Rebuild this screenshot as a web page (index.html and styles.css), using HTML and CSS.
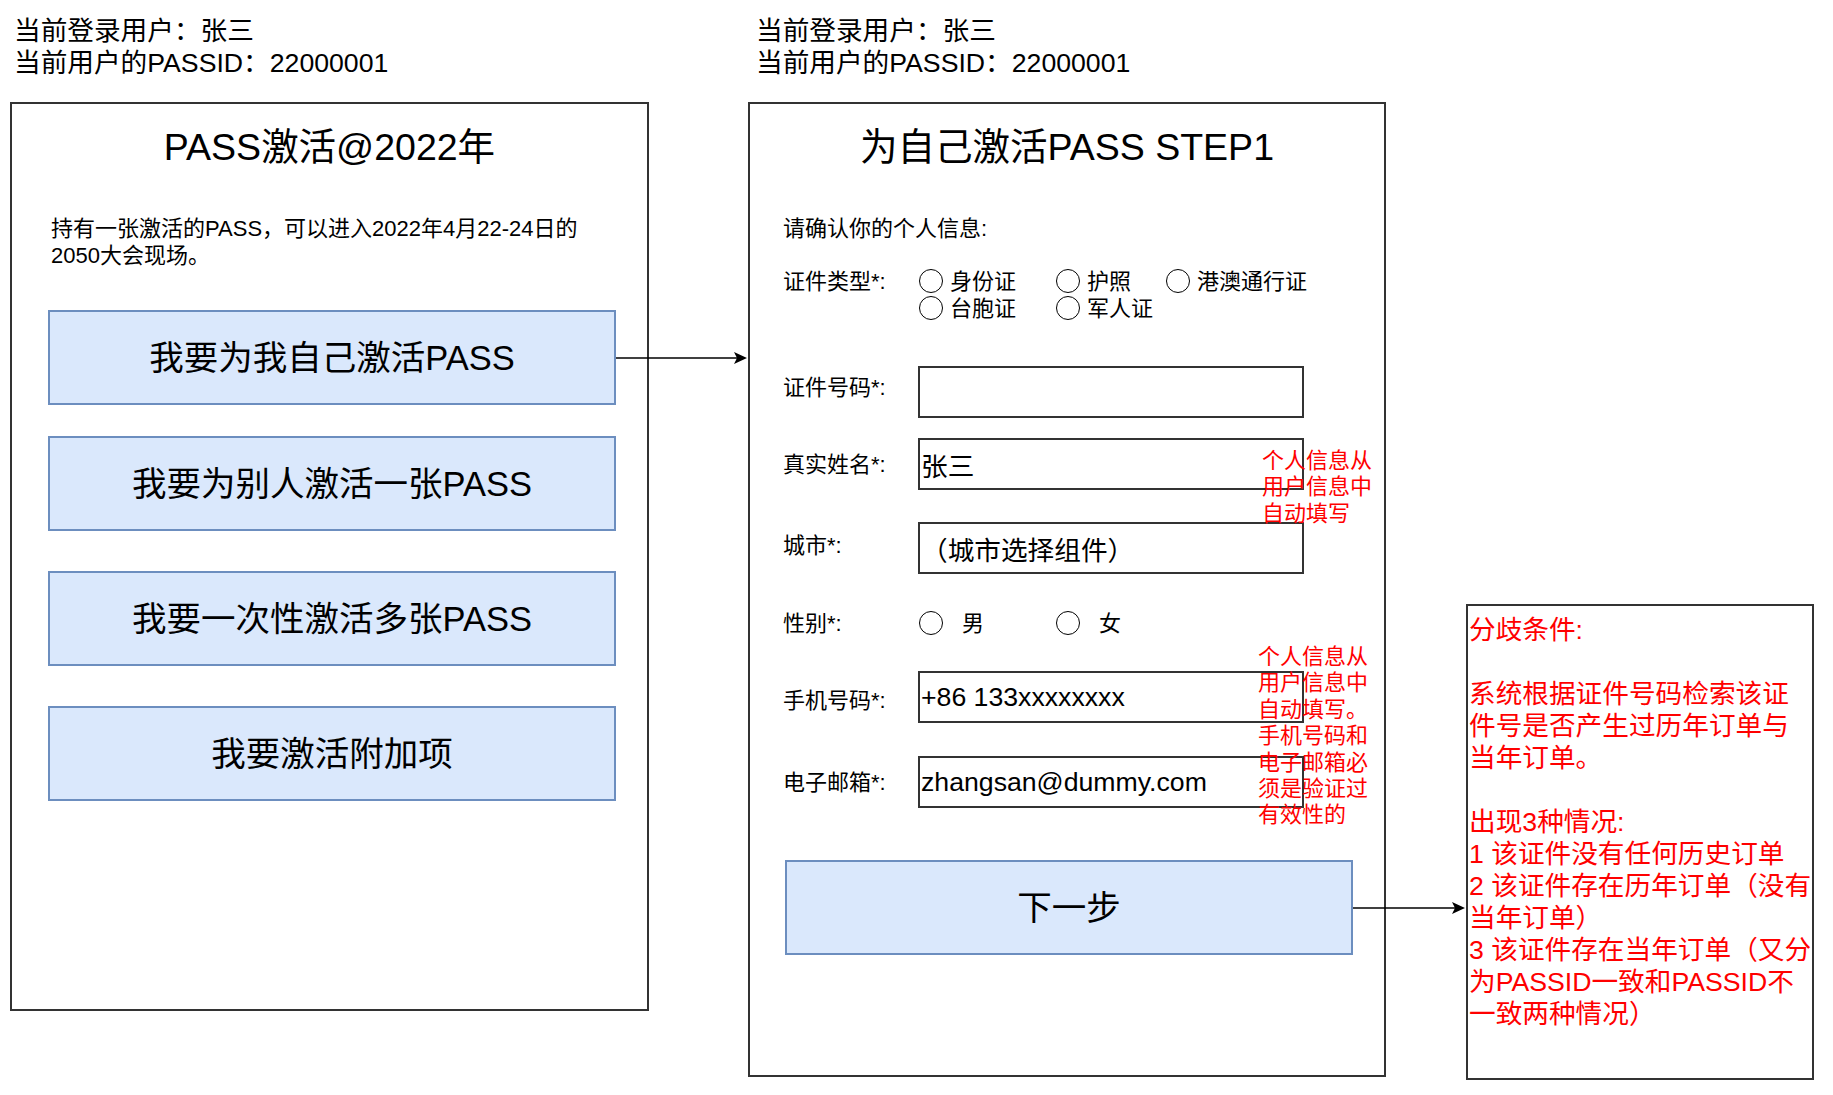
FILE: index.html
```html
<!DOCTYPE html>
<html lang="zh-CN">
<head>
<meta charset="utf-8">
<title>PASS激活</title>
<link rel="stylesheet" href="styles.css">
</head>
<body>
<div class="canvas">
  <section class="screen screen-home">
    <div class="user-info">
      <div>当前登录用户：张三</div>
      <div>当前用户的PASSID：22000001</div>
    </div>
    <div class="frame frame-home">
      <h1 class="frame-title">PASS激活@2022年</h1>
      <p class="intro">持有一张激活的PASS，可以进入2022年4月22-24日的<br>2050大会现场。</p>
      <div class="choice-list">
        <div class="choice choice-self">我要为我自己激活PASS
          <svg class="connector" width="131" height="14" viewBox="0 0 131 14"><line x1="0" y1="7" x2="121" y2="7" stroke="#000" stroke-width="1.5"/><path d="M118 1 L131 7 L118 13 L121 7 Z" fill="#000"/></svg>
        </div>
        <div class="choice">我要为别人激活一张PASS</div>
        <div class="choice">我要一次性激活多张PASS</div>
        <div class="choice">我要激活附加项</div>
      </div>
    </div>
  </section>

  <section class="screen screen-step1">
    <div class="user-info">
      <div>当前登录用户：张三</div>
      <div>当前用户的PASSID：22000001</div>
    </div>
    <div class="frame frame-step1">
      <h1 class="frame-title">为自己激活PASS STEP1</h1>
      <div class="form">
        <p class="form-intro">请确认你的个人信息:</p>
        <div class="field field-type">
          <span class="field-label">证件类型*:</span>
          <div class="options">
            <span class="option"><span class="radio"></span>身份证</span>
            <span class="option"><span class="radio"></span>护照</span>
            <span class="option"><span class="radio"></span>港澳通行证</span>
            <span class="option"><span class="radio"></span>台胞证</span>
            <span class="option"><span class="radio"></span>军人证</span>
          </div>
        </div>
        <div class="field field-id">
          <span class="field-label">证件号码*:</span>
          <div class="field-input"></div>
        </div>
        <div class="field field-name">
          <span class="field-label">真实姓名*:</span>
          <div class="field-input">张三</div>
        </div>
        <div class="field field-city">
          <span class="field-label">城市*:</span>
          <div class="field-input">（城市选择组件）</div>
        </div>
        <div class="field field-gender">
          <span class="field-label">性别*:</span>
          <div class="options options-gender">
            <span class="option"><span class="radio"></span>男</span>
            <span class="option"><span class="radio"></span>女</span>
          </div>
        </div>
        <div class="field field-phone">
          <span class="field-label">手机号码*:</span>
          <div class="field-input">+86 133xxxxxxxx</div>
        </div>
        <div class="field field-email">
          <span class="field-label">电子邮箱*:</span>
          <div class="field-input">zhangsan@dummy.com</div>
        </div>
        <div class="choice next">下一步
          <svg class="connector" width="112" height="14" viewBox="0 0 112 14"><line x1="0" y1="7" x2="102" y2="7" stroke="#000" stroke-width="1.5"/><path d="M99 1 L112 7 L99 13 L102 7 Z" fill="#000"/></svg>
        </div>
      </div>
      <p class="autofill-note note-name">个人信息从<br>用户信息中<br>自动填写</p>
      <p class="autofill-note note-contact">个人信息从<br>用户信息中<br>自动填写。<br>手机号码和<br>电子邮箱必<br>须是验证过<br>有效性的</p>
    </div>
  </section>

  <aside class="branch-note">分歧条件:<br><br>系统根据证件号码检索该证<br>件号是否产生过历年订单与<br>当年订单。<br><br>出现3种情况:<br>1 该证件没有任何历史订单<br>2 该证件存在历年订单（没有<br>当年订单）<br>3 该证件存在当年订单（又分<br>为PASSID一致和PASSID不<br>一致两种情况）</aside>
</div>
</body>
</html>
```

FILE: styles.css
```css
* {
  box-sizing: border-box;
}

body {
  margin: 0;
  background: #ffffff;
  color: #000000;
  font-family: "Liberation Sans", "Noto Sans CJK SC", sans-serif;
}

.canvas {
  display: flex;
  align-items: flex-start;
  width: 1833px;
  height: 1095px;
  padding-left: 10px;
}

.screen {
  display: flex;
  flex-direction: column;
}

.screen-home {
  width: 639px;
}

.screen-step1 {
  width: 638px;
  margin-left: 99px;
}

.user-info {
  margin-top: 15px;
  height: 64px;
  margin-bottom: 23px;
  font-size: 26.67px;
  line-height: 32px;
  white-space: nowrap;
}

.screen-home .user-info {
  padding-left: 4px;
}

.screen-step1 .user-info {
  padding-left: 8px;
}

.frame {
  position: relative;
  border: 2px solid #333333;
  background: #ffffff;
}

.frame-home {
  height: 909px;
}

.frame-step1 {
  height: 975px;
}

.frame-title {
  margin: 21px 0 0;
  font-size: 37.5px;
  line-height: 44px;
  font-weight: normal;
  text-align: center;
  white-space: nowrap;
}

.intro {
  margin: 45.5px 0 0 39px;
  font-size: 22px;
  line-height: 27px;
  white-space: nowrap;
}

.choice-list {
  display: flex;
  flex-direction: column;
  margin: 41.5px 31px 0 36px;
}

.choice {
  position: relative;
  display: flex;
  align-items: center;
  justify-content: center;
  height: 95px;
  padding-bottom: 5px;
  background: #dae8fc;
  border: 2px solid #6c8ebf;
  font-size: 34.5px;
  white-space: nowrap;
}

.choice + .choice {
  margin-top: 40px;
}

.choice-self {
  margin-bottom: -9px;
}

.connector {
  position: absolute;
  left: calc(100% + 2px);
  top: 50%;
  transform: translateY(-50%);
  overflow: visible;
}

/* step 1 form */
.form {
  padding-left: 33px;
}

.form-intro {
  margin: 45.5px 0 0;
  font-size: 22px;
  line-height: 27px;
  white-space: nowrap;
}

.field {
  display: flex;
  align-items: center;
  font-size: 22px;
}

.field-label {
  flex: none;
  width: 135px;
  line-height: 27px;
  white-space: nowrap;
}

.field-input {
  display: flex;
  align-items: center;
  width: 386px;
  height: 52px;
  padding-left: 1px;
  border: 2px solid #333333;
  background: #ffffff;
  font-size: 26.67px;
  white-space: nowrap;
}

.field-type {
  align-items: flex-start;
  margin-top: 26px;
}

.options {
  display: grid;
  grid-template-columns: 137px 110px auto;
  margin-left: 1px;
  line-height: 27px;
}

.option {
  display: flex;
  align-items: center;
  white-space: nowrap;
}

.radio {
  flex: none;
  width: 24px;
  height: 24px;
  margin-right: 7px;
  border: 1.6px solid #000000;
  border-radius: 50%;
}

.options-gender .radio {
  margin-right: 19px;
}

.field-id {
  margin-top: 44.5px;
}

.field-id .field-label {
  margin-bottom: 10px;
}

.field-name {
  margin-top: 20px;
}

.field-city {
  margin-top: 32px;
}

.field-city .field-label {
  margin-bottom: 6px;
}

.field-gender {
  height: 52px;
  margin-top: 23px;
}

.field-phone {
  margin-top: 22px;
}

.field-phone .field-label {
  margin-top: 6px;
}

.field-email {
  margin-top: 33px;
}

.next {
  width: 568px;
  margin: 52px 0 0 2px;
}

.autofill-note {
  position: absolute;
  margin: 0;
  color: #ff0000;
  font-size: 22px;
  line-height: 26.4px;
  white-space: nowrap;
}

.note-name {
  left: 512px;
  top: 344px;
}

.note-contact {
  left: 508px;
  top: 540px;
}

.branch-note {
  flex: none;
  width: 348px;
  height: 476px;
  margin: 604px 0 0 80px;
  padding: 8px 0 0 1px;
  border: 2px solid #333333;
  color: #ff0000;
  font-size: 26.67px;
  line-height: 32px;
  white-space: nowrap;
}
```
